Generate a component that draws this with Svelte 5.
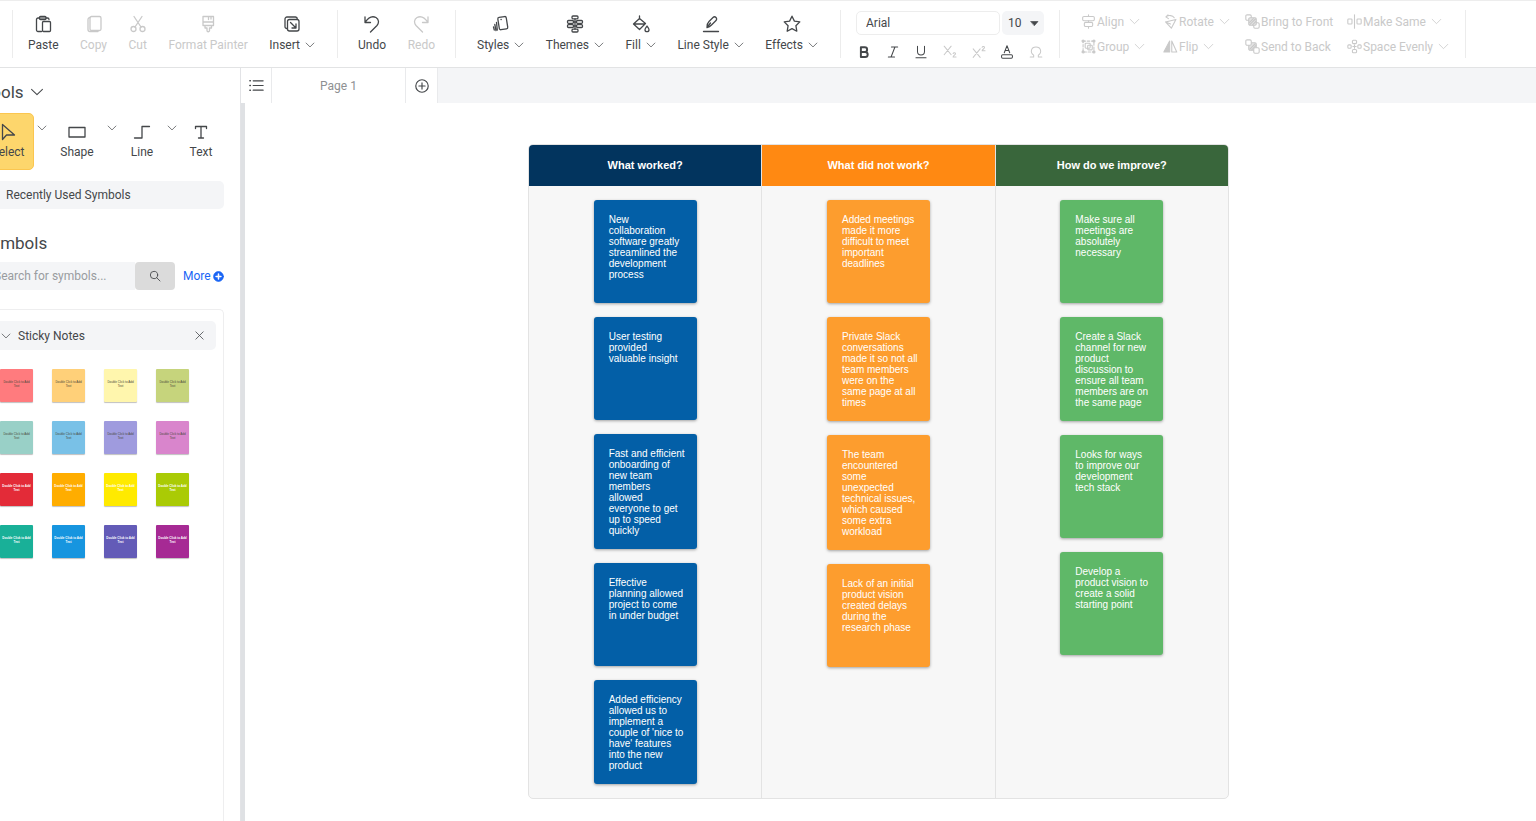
<script>
  let font = 'Arial';
  let fontSize = '10';
  let activeTool = 'Select';
  let search = '';

  // inner markup of every icon, drawn on an 18x18 grid
  const icons = {
    paste: '<path d="M7.5 16.5H4A1.5 1.5 0 0 1 2.5 15V4.5A1.5 1.5 0 0 1 4 3h1.5M12 3h1.5A1.5 1.5 0 0 1 15 4.5"/><rect x="5.5" y="1.5" width="6.5" height="3" rx="1" fill="currentColor" fill-opacity=".5"/><rect x="8.5" y="6.5" width="8" height="10" rx="1"/>',
    copy: '<rect x="5" y="1.5" width="11" height="14" rx="1.5"/><path d="M5 2.5A2 2 0 0 0 3 4.5v10a2 2 0 0 0 2 2h8"/>',
    cut: '<circle cx="4.5" cy="14" r="2.5"/><circle cx="13.5" cy="14" r="2.5"/><path d="M5 1.5l7 10.5M13 1.5L6 12"/>',
    painter: '<path d="M4 1.5h10.5v9H4zM4 7h10.5M9.5 1.5v3M12 1.5v2.5M6 10.5V13h2v2.500a1.2 1.2 0 0 0 2.5 0V13h2v-2.5"/>',
    insert: '<path d="M4 13.500a1.8 1.8 0 0 1-2-1.800V4A2 2 0 0 1 4 2h8.500a2 2 0 0 1 1.800 2"/><rect x="4.5" y="4.5" width="11.500" height="11.500" rx="2"/><path d="M7.500 7.500l5.500 5.500M13 9v4H9"/>',
    undo: '<path d="M2 2v5.500h5.500M2 7.500C5 3 9 .5 13 2.500c3 1.800 3.200 5.500 1 8L7.500 17"/>',
    redo: '<path d="M16 2v5.500h-5.500M16 7.500C13 3 9 .5 5 2.500c-3 1.800-3.200 5.500-1 8l6.500 6.500"/>',
    styles: '<rect x="6.500" y="2" width="8.500" height="12.500" rx="1.500" transform="rotate(-9 10 8)"/><path d="M4.500 7.500l.8 7.500M2.800 9.500l1.200 6M1.500 12l.8 3"/><path d="M9 4.500h.2"/>',
    themes: '<rect x="6" y="1" width="6" height="2.800" rx="1"/><rect x="1.500" y="5.500" width="6" height="2.800" rx="1"/><rect x="10.500" y="5.500" width="6" height="2.800" rx="1"/><rect x="1.500" y="9.700" width="6" height="2.800" rx="1"/><rect x="10.500" y="9.700" width="6" height="2.800" rx="1"/><rect x="6" y="14.200" width="6" height="2.800" rx="1"/><path d="M9 4v10M7.500 7h3M7.500 11h3"/>',
    fill: '<path d="M7.500 3.500l6 5-6 6-6-5.500zM7.500 1v3M2 9h11"/><path d="M15 11c-1.200 1.800-2 2.600-2 3.700a2 2 0 0 0 4 0c0-1.100-.8-1.900-2-3.700z"/>',
    line: '<path d="M1.500 16.500h15"/><path d="M5 12.500c-.3-3 .5-4.500 2-6l4-4a2 2 0 0 1 3 3l-4.500 4.500C8 11.500 7 12 5 12.500zM5 12.500l3.500-4.500"/>',
    effects: '<path d="M9 1.200l2.400 4.900 5.400.8-3.900 3.800.9 5.500L9 13.600l-4.800 2.600.9-5.500-3.900-3.800 5.400-.8z"/>',
    align: '<path d="M9 1v2M9 8v2M9 15v2"/><rect x="2" y="3" width="14" height="5" rx="1.500"/><rect x="4" y="10" width="10" height="5" rx="1.500"/>',
    group: '<path d="M2.500 2.500h13v13h-13z" stroke-dasharray="3 2"/><rect x="5" y="5" width="6" height="6" rx="1"/><rect x="8" y="7.500" width="5.500" height="5.500" rx="1"/><g fill="currentColor"><circle cx="2.500" cy="2.500" r="1.300"/><circle cx="15.500" cy="2.500" r="1.300"/><circle cx="2.500" cy="15.500" r="1.300"/><circle cx="15.500" cy="15.500" r="1.300"/></g>',
    rotate: '<path d="M3 9.500L15.500 6.500 10 17zM3 9.500l6 2.500M3.500 3.500C7 1 11.500 1.500 13.500 4.500M6 1L3.500 3.500 6.500 5.500"/>',
    flip: '<path d="M8 2.500v13H1z" fill="currentColor"/><path d="M10.500 2.500v13h6z"/>',
    front: '<rect x="1" y="1" width="6.500" height="6.500" rx="1.500"/><rect x="10.500" y="10.500" width="6.500" height="6.500" rx="1.500"/><rect x="4.500" y="4.500" width="9" height="9" rx="1.500" fill="#e4e4e4"/><path d="M5.500 10l4.500-4.500M6 12.500L12.500 6M9 13l4-4"/>',
    back: '<rect x="4.500" y="4.500" width="9" height="9" rx="1.500" fill="#e4e4e4"/><path d="M6 12l6-6M8 13l5-5"/><rect x="1" y="1" width="6.500" height="6.500" rx="1.500" fill="#fff"/><rect x="10.500" y="10.500" width="6.500" height="6.500" rx="1.500" fill="#fff"/>',
    same: '<rect x="1" y="6" width="5" height="6" rx="1"/><rect x="12" y="6" width="5" height="6" rx="1"/><path d="M9 1v16"/>',
    space: '<rect x="6.500" y="1.500" width="5" height="4" rx="1.200"/><rect x="6.500" y="12.500" width="5" height="4" rx="1.200"/><rect x="1" y="7" width="4" height="4" rx="1.200"/><rect x="13" y="7" width="4" height="4" rx="1.200"/><path d="M9 7v4M7 9h4"/>',
    select: '<path d="M3.500 1.500v15l4-4.500h8z"/>',
    shape: '<path d="M1 4.500h16v9.500H1z"/>',
    polyline: '<path d="M1.500 15H9V3.500h7.500"/>',
    text: '<path d="M3.500 5.500V3.500h11v2M9 3.500v11.500M6.500 15h5"/>',
    list: '<path d="M5.500 4H16M5.500 9H16M5.500 14H16"/><path d="M2 4h.5M2 9h.5M2 14h.5" stroke-width="1.600"/>',
    plus: '<circle cx="9" cy="9" r="7"/><path d="M9 5.500v7M5.500 9h7"/>',
    search: '<circle cx="7.500" cy="7.500" r="5.500"/><path d="M11.500 11.500l5 5"/>',
    more: '<circle cx="9" cy="9" r="8" fill="currentColor"/><path d="M9 5v8M5 9h8" stroke="#fff" stroke-width="2.500"/>',
    close: '<path d="M3 3l12 12M15 3L3 15"/>',
    chevron: '<path d="M2 5.500l7 7 7-7"/>',
    caret: '<path d="M2 5h14l-7 8z" fill="currentColor"/>',
    bold: '<path d="M5 3h5a2.800 2.800 0 0 1 0 6H5zM5 9h5.500a3 3 0 0 1 0 6.500H5z" stroke-width="2.500"/>',
    italic: '<path d="M7 2.500h8M3 15.500h8M11.500 2.500l-5 13"/>',
    underline: '<path d="M4.500 1.500v7a4.500 4.500 0 0 0 9 0v-7M2.500 16.500h13"/>',
    sub: '<path d="M1.500 1.500l9 11M10.500 1.500l-9 11M13 11c.5-1.500 3.500-1.300 3 .5-.3 1.500-3 2-3 4h3.800"/>',
    sup: '<path d="M1.500 5l9 11M10.500 5l-9 11M13 3c.5-1.500 3.500-1.300 3 .5-.3 1.500-3 2-3 4h3.800"/>',
    color: '<path d="M5.500 10L9 1l3.500 9M6.700 7h4.600"/><rect x="2" y="12.500" width="14" height="4.500" rx="1.500"/>',
    omega: '<path d="M1.500 15.500H6V13C1 9.500 2.500 2.500 9 2.500S17 9.500 12 13v2.500h4.500"/>'
  };

  const clipboardItems = [
    { label: 'Paste', icon: 'paste' },
    { label: 'Copy', icon: 'copy', disabled: true },
    { label: 'Cut', icon: 'cut', disabled: true },
    { label: 'Format Painter', icon: 'painter', disabled: true },
    { label: 'Insert', icon: 'insert', menu: true }
  ];
  const historyItems = [
    { label: 'Undo', icon: 'undo' },
    { label: 'Redo', icon: 'redo', disabled: true }
  ];
  const styleItems = [
    { label: 'Styles', icon: 'styles', menu: true },
    { label: 'Themes', icon: 'themes', menu: true },
    { label: 'Fill', icon: 'fill', menu: true },
    { label: 'Line Style', icon: 'line', menu: true },
    { label: 'Effects', icon: 'effects', menu: true }
  ];
  const groups = [
    { name: 'clipboard', items: clipboardItems },
    { name: 'history', items: historyItems },
    { name: 'styling', items: styleItems }
  ];

  const formats = [
    { label: 'Bold', icon: 'bold' },
    { label: 'Italic', icon: 'italic' },
    { label: 'Underline', icon: 'underline' },
    { label: 'Subscript', icon: 'sub', disabled: true },
    { label: 'Superscript', icon: 'sup', disabled: true },
    { label: 'Text color', icon: 'color' },
    { label: 'Symbol', icon: 'omega', disabled: true }
  ];

  const arrange = [
    { label: 'Align', icon: 'align', menu: true },
    { label: 'Rotate', icon: 'rotate', menu: true },
    { label: 'Bring to Front', icon: 'front' },
    { label: 'Make Same', icon: 'same', menu: true },
    { label: 'Group', icon: 'group', menu: true },
    { label: 'Flip', icon: 'flip', menu: true },
    { label: 'Send to Back', icon: 'back' },
    { label: 'Space Evenly', icon: 'space', menu: true }
  ];

  const tools = [
    { label: 'Select', icon: 'select', menu: true },
    { label: 'Shape', icon: 'shape', menu: true },
    { label: 'Line', icon: 'polyline', menu: true },
    { label: 'Text', icon: 'text' }
  ];

  const stickies = [
    '#ff7b7e', '#ffd079', '#fff6ad', '#c6d47c',
    '#99d0c7', '#79c1e7', '#9f9bde', '#d985cc',
    '#e32b38', '#ffad00', '#ffea00', '#aacb05',
    '#19b098', '#1795df', '#635bb7', '#a62a94'
  ];

  const columns = [
    {
      title: 'What worked?',
      theme: 'blue',
      notes: [
        'New\ncollaboration\nsoftware greatly\nstreamlined the\ndevelopment\nprocess',
        'User testing\nprovided\nvaluable insight',
        'Fast and efficient\nonboarding of\nnew team\nmembers\nallowed\neveryone to get\nup to speed\nquickly',
        'Effective\nplanning allowed\nproject to come\nin under budget',
        "Added efficiency\nallowed us to\nimplement a\ncouple of 'nice to\nhave' features\ninto the new\nproduct"
      ]
    },
    {
      title: 'What did not work?',
      theme: 'orange',
      notes: [
        'Added meetings\nmade it more\ndifficult to meet\nimportant\ndeadlines',
        'Private Slack\nconversations\nmade it so not all\nteam members\nwere on the\nsame page at all\ntimes',
        'The team\nencountered\nsome\nunexpected\ntechnical issues,\nwhich caused\nsome extra\nworkload',
        'Lack of an initial\nproduct vision\ncreated delays\nduring the\nresearch phase'
      ]
    },
    {
      title: 'How do we improve?',
      theme: 'green',
      notes: [
        'Make sure all\nmeetings are\nabsolutely\nnecessary',
        'Create a Slack\nchannel for new\nproduct\ndiscussion to\nensure all team\nmembers are on\nthe same page',
        'Looks for ways\nto improve our\ndevelopment\ntech stack',
        'Develop a\nproduct vision to\ncreate a solid\nstarting point'
      ]
    }
  ];
</script>

{#snippet icon(name, size)}
  <svg class="icon" viewBox="0 0 18 18" width={size} height={size} aria-hidden="true">{@html icons[name]}</svg>
{/snippet}

<div class="app">
  <header class="toolbar">
    {#each groups as g}
      <div class="group {g.name}">
        {#each g.items as item}
          <button class="item" disabled={item.disabled}>
            {@render icon(item.icon, 18)}
            <span class="label">
              {item.label}
              {#if item.menu}{@render icon('chevron', 10)}{/if}
            </span>
          </button>
        {/each}
      </div>
    {/each}

    <div class="group fonts">
      <div class="font-row">
        <select class="family" aria-label="Font" bind:value={font}>
          <option>Arial</option>
          <option>Georgia</option>
          <option>Verdana</option>
        </select>
        <div class="size">
          <select aria-label="Font size" bind:value={fontSize}>
            <option>10</option>
            <option>12</option>
            <option>14</option>
          </select>
          {@render icon('caret', 9)}
        </div>
      </div>
      <div class="format-row">
        {#each formats as f}
          <button aria-label={f.label} disabled={f.disabled}>{@render icon(f.icon, 14)}</button>
        {/each}
      </div>
    </div>

    <div class="group arrange">
      {#each arrange as a}
        <button disabled>
          {@render icon(a.icon, 15)}
          <span>{a.label}</span>
          {#if a.menu}{@render icon('chevron', 11)}{/if}
        </button>
      {/each}
    </div>
  </header>

  <div class="workspace">
    <aside class="sidebar">
      <h2>Tools {@render icon('chevron', 14)}</h2>
      <div class="tools">
        {#each tools as t}
          <button
            class="tool {t.icon}"
            class:active={activeTool === t.label}
            on:click={() => (activeTool = t.label)}
          >
            {@render icon(t.icon, 18)}
            {t.label}
          </button>
          {#if t.menu}
            <button class="tool-menu" aria-label="{t.label} options">{@render icon('chevron', 10)}</button>
          {/if}
        {/each}
      </div>

      <button class="recent">Recently Used Symbols</button>

      <h2 class="symbols-title">Symbols</h2>
      <div class="search">
        <input type="text" aria-label="Search for symbols" placeholder="Search for symbols..." bind:value={search} />
        <button class="search-btn" aria-label="Search">{@render icon('search', 12)}</button>
        <a href="#more">More {@render icon('more', 11)}</a>
      </div>

      <section class="library">
        <div class="library-head">
          {@render icon('chevron', 10)}
          <h3>Sticky Notes</h3>
          <button aria-label="Close">{@render icon('close', 11)}</button>
        </div>
        <div class="stickies">
          {#each stickies as color, i}
            <button class="sticky" class:strong={i > 7} style="background: {color}">Double Click to Add Text</button>
          {/each}
        </div>
      </section>
    </aside>

    <main>
      <nav class="tabs">
        <button class="pages" aria-label="Pages">{@render icon('list', 17)}</button>
        <button class="page">Page 1</button>
        <button class="add" aria-label="Add page">{@render icon('plus', 16)}</button>
      </nav>
      <div class="canvas">
        <div class="board">
          {#each columns as col}
            <section class="column {col.theme}">
              <h3>{col.title}</h3>
              <div class="notes">
                {#each col.notes as note}
                  <p>{note}</p>
                {/each}
              </div>
            </section>
          {/each}
        </div>
      </div>
    </main>
  </div>
</div>

<style>
  :global(body) {
    margin: 0;
    overflow: hidden;
  }

  .app {
    display: flex;
    flex-direction: column;
    height: 100vh;
    overflow: hidden;
    background: #fff;
    color: #44474a;
    font-family: Roboto, "Liberation Sans", sans-serif;
    font-size: 12px;
    line-height: 16px;
  }

  .app * {
    box-sizing: border-box;
  }

  .icon {
    flex: none;
    fill: none;
    stroke: currentColor;
    stroke-width: 1.3;
    stroke-linejoin: round;
    stroke-linecap: round;
  }

  button,
  select,
  input {
    margin: 0;
    padding: 0;
    border: 0;
    background: none;
    color: inherit;
    font: inherit;
  }

  button:disabled {
    color: #c9c9c9;
  }

  h2,
  h3,
  p {
    margin: 0;
    font-weight: 400;
  }

  /* toolbar */
  .toolbar {
    display: flex;
    flex: none;
    height: 68px;
    padding: 9px 0 9px 12px;
    border-top: 1px solid #ededed;
    border-bottom: 1px solid #e2e3e4;
  }

  .group {
    display: flex;
    flex: none;
    justify-content: space-between;
    border-left: 1px solid #ececec;
  }

  .clipboard {
    width: 325px;
    padding: 0 22px 0 15px;
  }

  .history {
    width: 118px;
    padding: 0 20px;
  }

  .styling {
    width: 385px;
    padding: 0 22px 0 21px;
  }

  .item {
    display: flex;
    flex-direction: column;
    align-items: center;
    gap: 4px;
    padding-top: 5px;
  }

  .label {
    display: flex;
    align-items: center;
    gap: 5px;
    white-space: nowrap;
  }

  .fonts {
    flex-direction: column;
    justify-content: flex-start;
    width: 219px;
    padding: 1px 15px 0;
    gap: 10px;
  }

  .font-row {
    display: flex;
    gap: 2px;
  }

  .family {
    flex: 1;
    height: 24px;
    padding: 0 9px;
    border: 1px solid #ededed;
    border-radius: 5px;
    appearance: none;
  }

  .size {
    display: flex;
    align-items: center;
    width: 42px;
    height: 24px;
    padding: 0 5px 0 6px;
    border-radius: 5px;
    background: #f4f5f7;
  }

  .size select {
    flex: 1;
    min-width: 0;
    appearance: none;
  }

  .format-row {
    display: flex;
    justify-content: space-between;
    padding: 0 1px;
  }

  .format-row button {
    display: flex;
  }

  .arrange {
    display: grid;
    grid-template-columns: 82px 82px 102px 1fr;
    grid-template-rows: 23px 23px;
    row-gap: 2px;
    width: 407px;
    padding: 0 0 0 21px;
    border-right: 1px solid #ececec;
    align-content: start;
  }

  .arrange button {
    display: flex;
    align-items: center;
    gap: 1px;
    white-space: nowrap;
  }

  .arrange button .icon:last-child {
    margin-left: 4px;
  }

  .workspace {
    display: flex;
    flex: 1;
    min-height: 0;
  }

  /* sidebar, scrolled partly out of view on the left */
  .sidebar {
    display: flex;
    flex: none;
    flex-direction: column;
    width: 275px;
    margin-left: -34px;
    padding: 12px 16px 0;
    border-right: 1px solid #e2e3e6;
  }

  h2 {
    display: flex;
    align-items: center;
    gap: 6px;
    font-size: 17px;
    line-height: 24px;
  }

  .tools {
    display: flex;
    height: 57px;
    margin-top: 9px;
  }

  .tool {
    display: flex;
    flex-direction: column;
    align-items: center;
    gap: 3px;
    padding-top: 10px;
    border-radius: 5px;
  }

  .tool.select {
    width: 52px;
  }

  .tool.shape {
    width: 54px;
  }

  .tool.polyline {
    width: 44px;
  }

  .tool.text {
    width: 42px;
  }

  .tool.active {
    padding-top: 9px;
    border: 1px solid #fbc64f;
    background: #fdd66c;
  }

  .tool-menu {
    display: flex;
    justify-content: center;
    width: 16px;
    padding-top: 10px;
  }

  .recent {
    height: 28px;
    margin-top: 11px;
    padding-left: 24px;
    border-radius: 5px;
    background: #f4f5f7;
    text-align: left;
  }

  .symbols-title {
    margin-top: 22px;
  }

  .search {
    display: flex;
    align-items: center;
    height: 28px;
    margin-top: 7px;
  }

  .search input {
    width: 153px;
    height: 28px;
    padding-left: 12px;
    background: #f4f5f7;
  }

  .search input::placeholder {
    color: #999c9f;
  }

  .search-btn {
    display: flex;
    align-items: center;
    justify-content: center;
    width: 40px;
    height: 28px;
    border-radius: 4px;
    background: #dbdbdb;
  }

  .search a {
    display: flex;
    flex: 1;
    align-items: center;
    justify-content: space-between;
    padding-left: 8px;
    color: #1b66f5;
    text-decoration: none;
  }

  .library {
    flex: 1;
    margin-top: 19px;
    padding: 11px 7px 0;
    border: 1px solid #eeeeef;
    border-bottom: 0;
    border-radius: 5px 5px 0 0;
  }

  .library-head {
    display: flex;
    align-items: center;
    gap: 7px;
    height: 29px;
    padding: 0 11px;
    border-radius: 5px;
    background: #f4f5f7;
  }

  .library-head h3 {
    flex: 1;
    font-size: 12px;
  }

  .library-head button {
    display: flex;
  }

  .stickies {
    display: grid;
    grid-template-columns: repeat(4, 33px);
    gap: 19px;
    margin: 19px 0 0 10px;
  }

  .sticky {
    height: 33px;
    padding: 0 2px 4px;
    border-radius: 1px;
    box-shadow: 0 1px 1px rgba(0, 0, 0, 0.25);
    color: #4a4a3c;
    font-family: "Liberation Sans", Arial, sans-serif;
    font-size: 3px;
    line-height: 4px;
  }

  .sticky.strong {
    color: #fff;
    font-weight: 700;
  }

  /* page area */
  main {
    display: flex;
    flex: 1;
    flex-direction: column;
    min-width: 0;
  }

  .tabs {
    display: flex;
    flex: none;
    height: 35px;
    background: #f4f5f7;
  }

  .tabs button {
    display: flex;
    align-items: center;
    justify-content: center;
    border-right: 1px solid #e9eaec;
    background: #fff;
  }

  .pages {
    width: 31px;
  }

  .tabs .page {
    width: 134px;
    color: #8e9092;
  }

  .tabs .add {
    width: 32px;
  }

  .canvas {
    flex: 1;
    padding: 41px 0 0 283px;
    border-left: 4px solid #dfe1e4;
    overflow: hidden;
  }

  .board {
    display: flex;
    width: 701px;
    border: 1px solid #e3e3e3;
    border-radius: 5px;
    background: #f7f7f7;
    overflow: hidden;
    font-family: "Liberation Sans", Arial, sans-serif;
  }

  .column {
    flex: 1;
  }

  .column + .column {
    border-left: 1px solid #e3e3e3;
  }

  .column h3 {
    height: 41px;
    color: #fff;
    font-size: 11px;
    font-weight: 700;
    line-height: 41px;
    text-align: center;
  }

  .notes {
    display: flex;
    flex-direction: column;
    align-items: center;
    gap: 14px;
    padding: 14px 0 14px;
  }

  .notes p {
    width: 103px;
    min-height: 103px;
    padding: 14px 13px 13px 15px;
    border-radius: 3px;
    box-shadow: 0 1px 3px rgba(0, 0, 0, 0.35);
    color: #fff;
    font-size: 10px;
    line-height: 11px;
    white-space: pre;
  }

  .blue h3 {
    background: #02345e;
  }

  .blue p {
    background: #035fa7;
  }

  .orange h3 {
    background: #ff8912;
  }

  .orange p {
    background: #fd9d2e;
  }

  .green h3 {
    background: #39663b;
  }

  .green p {
    background: #5fb868;
  }
</style>
